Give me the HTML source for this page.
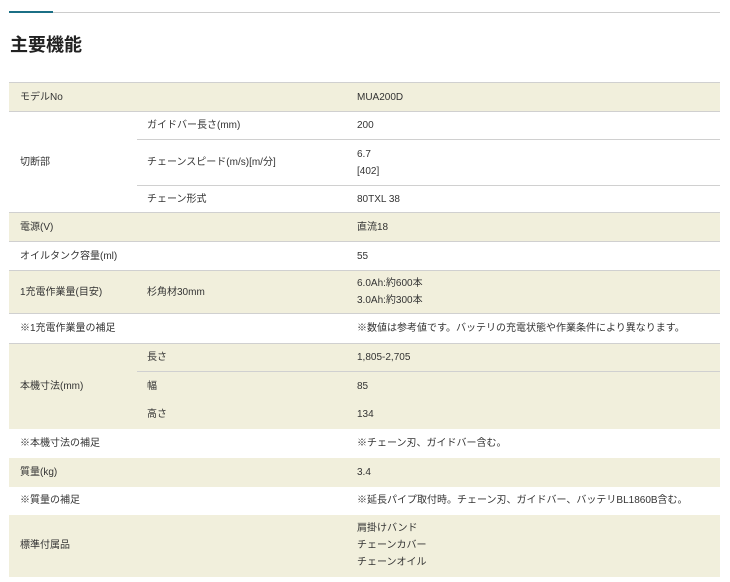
<!DOCTYPE html>
<html><head><meta charset="utf-8"><style>
body{margin:0;background:#fff;font-family:"Liberation Sans","Noto Sans CJK JP",sans-serif;color:#333;font-size:10px;}
.top{position:absolute;left:9px;top:12px;width:711px;height:1px;background:#ccc}
.top i{position:absolute;left:0;top:-1px;width:44px;height:2px;background:#1b6f85}
h1{position:absolute;left:10px;top:31px;margin:0;font-size:18px;font-weight:bold;color:#222;font-family:"Noto Sans CJK JP",sans-serif}
table{position:absolute;left:9px;top:82px;width:711px;border-collapse:collapse}
td{padding:0;vertical-align:middle;border-top:1px solid #d0d0d0;line-height:17px}
td.a{padding-left:11px;width:117px}
td.b{padding-left:10px;width:200px}
td.c{padding-left:10px}
tr.y td{background:#f1efdc}
td.n{border-top:none}
</style></head><body>
<div class="top"><i></i></div>
<h1>主要機能</h1>
<table>
<tr class="y" style="height:29px"><td class="a">モデルNo</td><td class="b"></td><td class="c">MUA200D</td></tr>
<tr style="height:28px"><td class="a" rowspan="3">切断部</td><td class="b">ガイドバー長さ(mm)</td><td class="c">200</td></tr>
<tr style="height:46px"><td class="b">チェーンスピード(m/s)[m/分]</td><td class="c">6.7<br>[402]</td></tr>
<tr style="height:27px"><td class="b">チェーン形式</td><td class="c">80TXL 38</td></tr>
<tr class="y" style="height:29px"><td class="a">電源(V)</td><td class="b"></td><td class="c">直流18</td></tr>
<tr style="height:29px"><td class="a">オイルタンク容量(ml)</td><td class="b"></td><td class="c">55</td></tr>
<tr class="y" style="height:43px"><td class="a">1充電作業量(目安)</td><td class="b">杉角材30mm</td><td class="c">6.0Ah:約600本<br>3.0Ah:約300本</td></tr>
<tr style="height:30px"><td class="a">※1充電作業量の補足</td><td class="b"></td><td class="c">※数値は参考値です。バッテリの充電状態や作業条件により異なります。</td></tr>
<tr class="y" style="height:28px"><td class="a" rowspan="3">本機寸法(mm)</td><td class="b">長さ</td><td class="c">1,805-2,705</td></tr>
<tr class="y" style="height:29px"><td class="b">幅</td><td class="c">85</td></tr>
<tr class="y" style="height:28px"><td class="b n">高さ</td><td class="c n">134</td></tr>
<tr style="height:29px"><td class="a n">※本機寸法の補足</td><td class="b n"></td><td class="c n">※チェーン刃、ガイドバー含む。</td></tr>
<tr class="y" style="height:29px"><td class="a n">質量(kg)</td><td class="b n"></td><td class="c n">3.4</td></tr>
<tr style="height:28px"><td class="a n">※質量の補足</td><td class="b n"></td><td class="c n">※延長パイプ取付時。チェーン刃、ガイドバー、バッテリBL1860B含む。</td></tr>
<tr class="y" style="height:62px"><td class="a n">標準付属品</td><td class="b n"></td><td class="c n">肩掛けバンド<br>チェーンカバー<br>チェーンオイル</td></tr>
</table>
</body></html>
